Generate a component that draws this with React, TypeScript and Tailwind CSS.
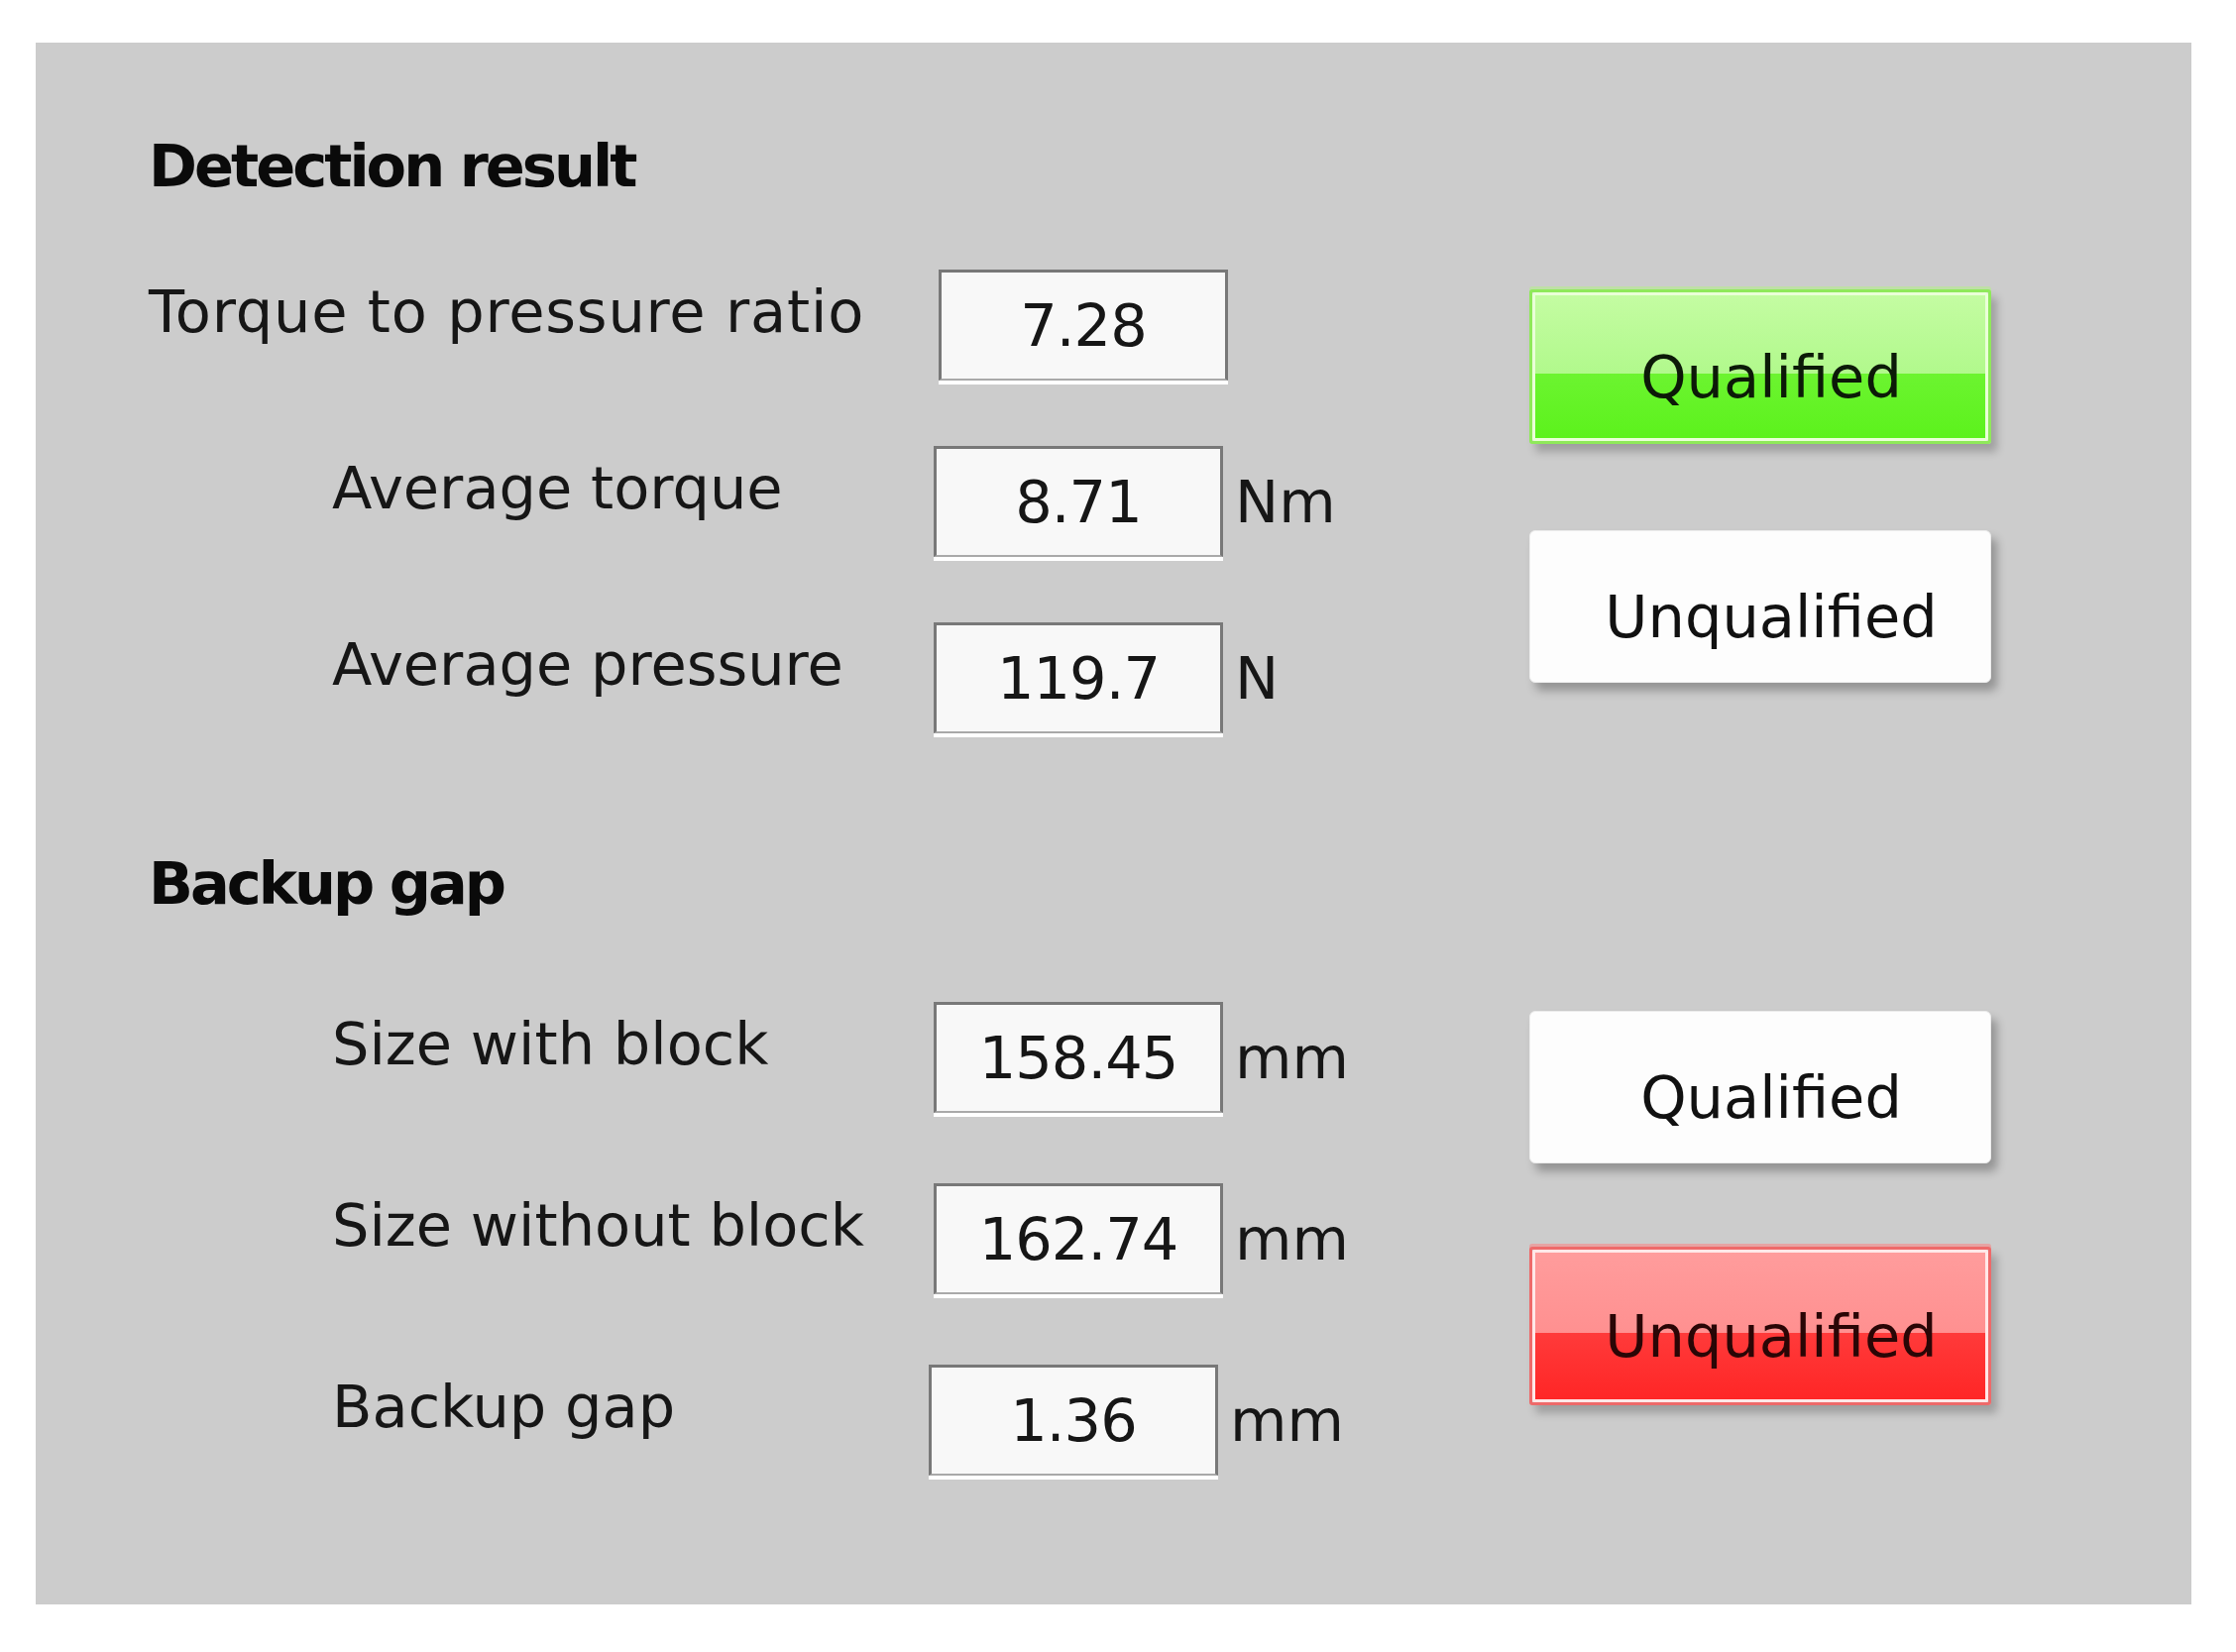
import React from 'react';

type Row = { label: string; value: string; unit?: string; labelW: string; indent: boolean };

const resultRows: Row[] = [
  { label: 'Torque to pressure ratio', value: '7.28', labelW: 'w-[797px]', indent: false },
  { label: 'Average torque', value: '8.71', unit: 'Nm', labelW: 'w-[792px]', indent: true },
  { label: 'Average pressure', value: '119.7', unit: 'N', labelW: 'w-[792px]', indent: true },
];

const gapRows: Row[] = [
  { label: 'Size with block', value: '158.45', unit: 'mm', labelW: 'w-[792px]', indent: true },
  { label: 'Size without block', value: '162.74', unit: 'mm', labelW: 'w-[792px]', indent: true },
  { label: 'Backup gap', value: '1.36', unit: 'mm', labelW: 'w-[787px]', indent: true },
];

const ValueRow: React.FC<{ row: Row }> = ({ row }) => (
  <div className="flex items-center h-[112px]">
    <div className={`${row.labelW} ${row.indent ? 'pl-[185px]' : 'tracking-[0.8px]'} mb-[28px] leading-[59px] whitespace-nowrap`}>
      {row.label}
    </div>
    <div className="w-[292px] h-[112px] flex items-center justify-center bg-[#f8f8f8] border-[3px] border-[#787878] border-b-[2px] border-b-[#a9a9a9] shadow-[0_4px_0_#ffffff]">
      <span className="leading-[59px] tracking-[-1px]">{row.value}</span>
    </div>
    {row.unit && <span className="ml-[12px] leading-[59px]">{row.unit}</span>}
  </div>
);

// Glossy status button (green / red) with the two-tone fill
const GlossButton: React.FC<{ label: string; tone: 'green' | 'red' }> = ({ label, tone }) => {
  const outer =
    tone === 'green'
      ? 'h-[156px] mt-[4px] border-[3px] border-[#8fe95a] shadow-[0_-3px_0_#bfe0a6,6px_8px_9px_rgba(0,0,0,0.22)]'
      : 'h-[160px] border-[3px] border-[#ee6a6a] shadow-[0_-3px_0_#e6a3a3,6px_8px_9px_rgba(0,0,0,0.22)]';
  const inner =
    tone === 'green'
      ? 'border-[#eaffd8] bg-[linear-gradient(to_bottom,#c4fca2_0%,#b1f98c_55%,#6cf430_55%,#5cf21c_100%)] text-[#0c1a08]'
      : 'border-[#ffe8e8] bg-[linear-gradient(to_bottom,#ff9c9c_0%,#ff9090_55%,#ff3a3a_55%,#ff2626_100%)] text-[#2a0606]';
  return (
    <div className={`${outer} rounded-[3px]`}>
      <div className={`h-full border-[3px] rounded-[2px] ${inner} flex items-center justify-center pt-[20px] pl-[22px]`}>
        <span className="leading-[59px]">{label}</span>
      </div>
    </div>
  );
};

const PlainButton: React.FC<{ label: string }> = ({ label }) => (
  <div className="h-[154px] rounded-[6px] bg-[#fdfdfd] border border-[#ececec] shadow-[6px_8px_10px_rgba(0,0,0,0.28)] flex items-center justify-center pt-[20px] pl-[22px]">
    <span className="leading-[59px] text-[#111]">{label}</span>
  </div>
);

export default function App() {
  return (
    <div className="w-[2256px] h-[1667px] bg-white pl-[36px] pt-[43px] font-['DejaVu_Sans',sans-serif] text-[59px] text-[#161616]">
      <div className="w-[2175px] h-[1576px] bg-[#cccccc] pl-[114px] pt-[95px]">
        {/* Detection result */}
        <h2 className="font-bold leading-[59px] tracking-[-3px] text-[#0a0a0a]">Detection result</h2>
        <div className="flex mt-[75px]">
          <div className="w-[1393px] flex flex-col gap-[66px]">
            {resultRows.map((r) => (
              <ValueRow key={r.label} row={r} />
            ))}
          </div>
          <div className="w-[466px] flex flex-col pt-[16px] gap-[87px]">
            <GlossButton label="Qualified" tone="green" />
            <PlainButton label="Unqualified" />
          </div>
        </div>

        {/* Backup gap */}
        <h2 className="mt-[122px] font-bold leading-[59px] tracking-[-3px] text-[#0a0a0a]">Backup gap</h2>
        <div className="flex mt-[90px]">
          <div className="w-[1393px] flex flex-col gap-[71px]">
            {gapRows.map((r) => (
              <ValueRow key={r.label} row={r} />
            ))}
          </div>
          <div className="w-[466px] flex flex-col pt-[9px] gap-[84px]">
            <PlainButton label="Qualified" />
            <GlossButton label="Unqualified" tone="red" />
          </div>
        </div>
      </div>
    </div>
  );
}
